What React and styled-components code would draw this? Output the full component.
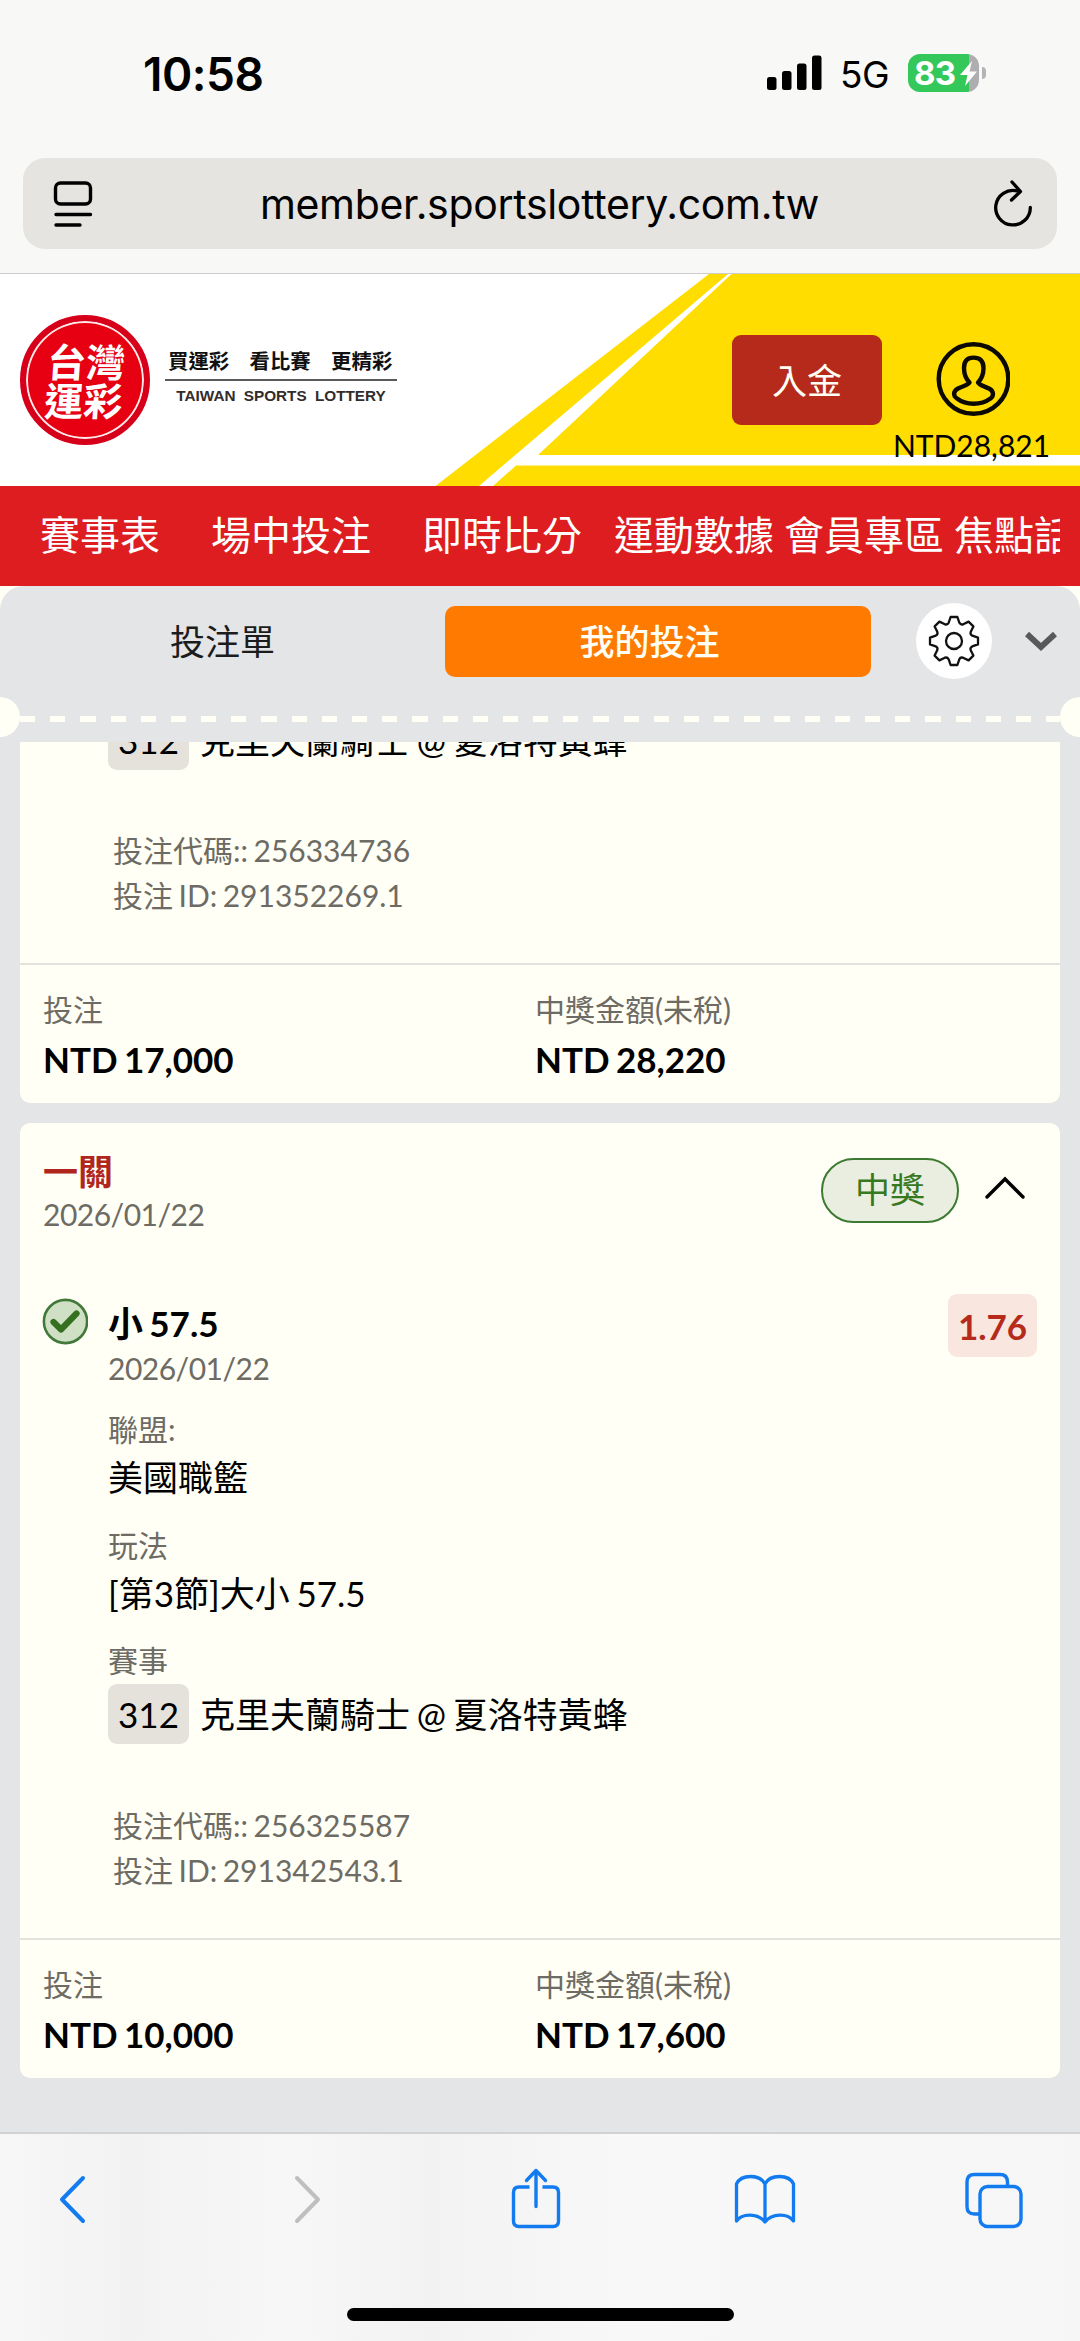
import React from "react";
import styled, { createGlobalStyle } from "styled-components";

const App = () => {
    return (
        <Screen>
            <GlobalStyle />
            <StatusBar />
            <AddressBar />
            <SiteHeader />
            <NavBar />
            <BetPanel>
                <PanelHead />
                <BetList>
                    <Card>
                        <Match match={bets[0]} />
                        <Codes bet={bets[0]} />
                        <Totals bet={bets[0]} />
                    </Card>
                    <BetCard bet={bets[1]} />
                </BetList>
            </BetPanel>
            <BrowserToolbar />
        </Screen>
    )
}

const bets = [
    {
        number: "312",
        teams: "克里夫蘭騎士 @ 夏洛特黃蜂",
        code: "256334736",
        id: "291352269.1",
        stake: "NTD 17,000",
        payout: "NTD 28,220",
    },
    {
        type: "一關",
        date: "2026/01/22",
        status: "中獎",
        pick: "小 57.5",
        odds: "1.76",
        details: [
            { label: "聯盟:", value: "美國職籃" },
            { label: "玩法", value: "[第3節]大小 57.5" },
        ],
        number: "312",
        teams: "克里夫蘭騎士 @ 夏洛特黃蜂",
        code: "256325587",
        id: "291342543.1",
        stake: "NTD 10,000",
        payout: "NTD 17,600",
    },
];

const navItems = [
    { text: "賽事表", gap: 51 },
    { text: "場中投注", gap: 51 },
    { text: "即時比分", gap: 32 },
    { text: "運動數據", gap: 10 },
    { text: "會員專區", gap: 10 },
    { text: "焦點話題", gap: 0 },
];

const StatusBar = () => (
    <StatusRow>
        <Clock>10:58</Clock>
        <StatusIcons>
            <svg width="56" height="36" viewBox="0 0 56 36">
                <rect x="0" y="22" width="9.5" height="13" rx="2.5" />
                <rect x="15" y="16" width="9.5" height="19" rx="2.5" />
                <rect x="30" y="8.5" width="9.5" height="26.5" rx="2.5" />
                <rect x="45" y="0.5" width="9.5" height="34.5" rx="2.5" />
            </svg>
            <Network>5G</Network>
            <Battery>
                <BatteryLevel>83</BatteryLevel>
                <Bolt width="21" height="27" viewBox="0 0 21 27">
                    <path d="M14 1 L2 15 H9.5 L7 26 L19 11.5 H11.5 Z" fill="#fff" />
                </Bolt>
            </Battery>
            <BatteryCap />
        </StatusIcons>
    </StatusRow>
)

const AddressBar = () => (
    <AddressWrap>
        <AddressField>
            <svg width="40" height="46" viewBox="0 0 40 46" fill="none" stroke="#000" strokeWidth="3.4" strokeLinecap="round">
                <rect x="2.5" y="2" width="35" height="21" rx="5" />
                <path d="M3 33.5 H37.5 M3 44 H27" />
            </svg>
            <Url>member.sportslottery.com.tw</Url>
            <svg width="40" height="48" viewBox="0 0 40 48" fill="none" stroke="#000" strokeWidth="3.3" strokeLinecap="round" strokeLinejoin="round">
                <path d="M24 10.8 A17.3 17.3 0 1 0 37.3 27.5" />
                <path d="M19 2 L27.5 11.5 L18.5 20" />
            </svg>
        </AddressField>
    </AddressWrap>
)

const SiteHeader = () => (
    <Header>
        <Stripes width="1080" height="212" viewBox="0 0 1080 212">
            <path d="M709 0 H1080 V212 H435.5 Z" fill="#fd0" />
            <path d="M728 0 H731.5 L538 181 H1080 V191.5 H516 L493 212 H479 Z" fill="#fff" />
        </Stripes>
        <Brand>
            <Seal>
                <SealText>
                    <span>台灣</span>
                    <span>運彩</span>
                </SealText>
            </Seal>
            <Slogan>
                <SloganZh>買運彩　看比賽　更精彩</SloganZh>
                <SloganEn>TAIWAN SPORTS LOTTERY</SloganEn>
            </Slogan>
        </Brand>
        <Deposit>入金</Deposit>
        <Account>
            <UserIcon width="74" height="76" viewBox="0 0 74 76" fill="none" stroke="#0c0a00" strokeWidth="4.4" strokeLinejoin="round">
                <circle cx="37.5" cy="38" r="34.8" />
                <path d="M33.5 41.500 C29.500 37.500 28 32.500 28 27 C28 20 31.500 16.600 37.500 16.600 C44 16.600 47.500 20 47.500 27 C47.500 32.500 46 37.500 42 41.500 C44 44.500 49 45.500 53 47.500 C58 50 58 55 54.500 57.500 C45 64.500 30 64.500 21 57.500 C17 55 17 50 22 47.500 C26 45.500 31.500 44.500 33.500 41.500 Z" />
            </UserIcon>
            <Balance>NTD28,821</Balance>
        </Account>
    </Header>
)

const NavBar = () => (
    <Nav>
        <NavScroll>
            {navItems.map((item) => (
                <NavItem key={item.text} $gap={item.gap}>{item.text}</NavItem>
            ))}
        </NavScroll>
    </Nav>
)

const PanelHead = () => (
    <div>
        <Tabs>
            <Tab>投注單</Tab>
            <ActiveTab>我的投注</ActiveTab>
            <GearButton>
                <GearIcon />
            </GearButton>
            <svg width="32" height="20" viewBox="0 0 32 20" fill="none" stroke="#58595b" strokeWidth="5.8">
                <path d="M2 3 L16 16 L30 3" />
            </svg>
        </Tabs>
        <TearLine>
            <Notch />
            <Dashes />
            <Notch $right />
        </TearLine>
    </div>
)

// eight teeth, each one turned by 45 degrees
const gearPath = () => {
    const turn = (x, y, deg) => {
        const a = (deg * Math.PI) / 180;
        const px = 26 + x * Math.cos(a) - y * Math.sin(a);
        const py = 26 + x * Math.sin(a) + y * Math.cos(a);
        return px.toFixed(2) + " " + py.toFixed(2);
    };
    let d = "";
    for (let i = 0; i < 8; i++) {
        const deg = i * 45;
        d += (i === 0 ? "M" : "L") + turn(-3.4, -24, deg);
        d += "L" + turn(3.4, -24, deg);
        d += "L" + turn(5.4, -18.2, deg);
        d += "Q" + turn(6.7, -15.8, deg) + " " + turn(9.2, -16.7, deg);
    }
    return d + "Z";
}

const GearIcon = () => (
    <svg width="52" height="52" viewBox="0 0 52 52" fill="none" stroke="#111" strokeWidth="2.3" strokeLinejoin="round">
        <path d={gearPath()} />
        <circle cx="26" cy="26" r="8" />
    </svg>
)

const Match = ({ match }) => (
    <MatchRow>
        <MatchNumber>{match.number}</MatchNumber>
        <span>{match.teams}</span>
    </MatchRow>
)

const Codes = ({ bet }) => (
    <CodeBlock>
        <div>投注代碼:: {bet.code}</div>
        <div>投注 ID: {bet.id}</div>
    </CodeBlock>
)

const Totals = ({ bet }) => (
    <TotalsRow>
        <div>
            <Label>投注</Label>
            <Amount>{bet.stake}</Amount>
        </div>
        <div>
            <Label>中獎金額(未稅)</Label>
            <Amount>{bet.payout}</Amount>
        </div>
    </TotalsRow>
)

const BetCard = ({ bet }) => (
    <Card>
        <CardHead>
            <div>
                <BetType>{bet.type}</BetType>
                <BetDate>{bet.date}</BetDate>
            </div>
            <CardHeadRight>
                <WonBadge>{bet.status}</WonBadge>
                <Chevron width="42" height="24" viewBox="0 0 42 24" fill="none" stroke="#000" strokeWidth="3.4" strokeLinecap="round">
                    <path d="M3 21 L21 3 L39 21" />
                </Chevron>
            </CardHeadRight>
        </CardHead>
        <Pick>
            <svg width="46" height="47" viewBox="0 0 46 47" fill="none" strokeLinecap="round" strokeLinejoin="round">
                <circle cx="23.5" cy="23.5" r="21.6" fill="#cfe0c4" stroke="#42793a" strokeWidth="2.6" />
                <path d="M11.5 24 L19 31.5 L34.5 15.5" stroke="#34701f" strokeWidth="6.2" />
            </svg>
            <PickText>
                <PickName>{bet.pick}</PickName>
                <BetDate>{bet.date}</BetDate>
            </PickText>
            <Odds>{bet.odds}</Odds>
        </Pick>
        {bet.details.map((detail) => (
            <Detail key={detail.label}>
                <Label>{detail.label}</Label>
                <DetailValue>{detail.value}</DetailValue>
            </Detail>
        ))}
        <Detail>
            <Label>賽事</Label>
        </Detail>
        <Match match={bet} />
        <Codes bet={bet} />
        <Totals bet={bet} />
    </Card>
)

const BrowserToolbar = () => (
    <Toolbar>
        <ToolbarIcons>
            <svg width="30" height="64" viewBox="0 0 30 64" fill="none" stroke="#127bf0" strokeWidth="4" strokeLinecap="round" strokeLinejoin="round">
                <path d="M26 10 L5 31.5 L26 53" />
            </svg>
            <svg width="30" height="64" viewBox="0 0 30 64" fill="none" stroke="#bfbfbf" strokeWidth="4" strokeLinecap="round" strokeLinejoin="round">
                <path d="M5 10 L26 31.5 L5 53" />
            </svg>
            <svg width="50" height="64" viewBox="0 0 50 64" fill="none" stroke="#127bf0" strokeWidth="3.4" strokeLinecap="round" strokeLinejoin="round">
                <path d="M18.5 19 H8 Q2.500 19 2.500 24.500 V53 Q2.500 58.500 8 58.500 H42 Q47.500 58.500 47.500 53 V24.500 Q47.500 19 42 19 H31.500" strokeLinecap="butt" />
                <path d="M25 38.5 V2.500 M15.500 12.500 L25 2.500 L34.500 12.500" />
            </svg>
            <svg width="62" height="64" viewBox="0 0 62 64" fill="none" stroke="#127bf0" strokeWidth="3.3" strokeLinejoin="round">
                <path d="M31 16 C26 6 7 6 2.500 16 V53 C8 45 24 45 31 54 C38 45 54 45 59.500 53 V16 C55 6 36 6 31 16 V54" />
            </svg>
            <svg width="58" height="64" viewBox="0 0 58 64" fill="none" stroke="#127bf0" strokeWidth="3.4">
                <path d="M14.5 46 H9.500 Q2 46 2 38.500 V14 Q2 6.500 9.500 6.500 H35 Q42.500 6.500 42.500 14 V19" />
                <rect x="15" y="18.5" width="41" height="40" rx="7.5" />
            </svg>
        </ToolbarIcons>
        <HomeIndicator />
    </Toolbar>
)


const GlobalStyle = createGlobalStyle`
    body {
        margin: 0;
        background-color: #f8f8f6;
    }
    * {
        box-sizing: border-box;
    }
    svg {
        display: block;
        flex-shrink: 0;
    }
`;

const Screen = styled.div`
    display: flex;
    flex-direction: column;
    width: 1080px;
    height: 2341px;
    overflow: hidden;
    background-color: #f8f8f6;
    font-family: Lato, "Noto Sans CJK TC", sans-serif;
    color: #000;
`;

const StatusRow = styled.div`
    display: flex;
    justify-content: space-between;
    height: 158px;
    padding: 51px 94px 0 143px;
    font-family: Inter, sans-serif;
`;

const Clock = styled.div`
    font-size: 46px;
    font-weight: 600;
    line-height: 46px;
    letter-spacing: -0.5px;
`;

const StatusIcons = styled.div`
    display: flex;
    align-items: center;
    height: 43px;
`;

const Network = styled.span`
    margin-left: 17px;
    width: 68px;
    font-size: 37px;
    line-height: 40px;
    padding-top: 4px;
    letter-spacing: -0.5px;
`;

const Battery = styled.div`
    position: relative;
    display: flex;
    align-items: center;
    width: 71px;
    height: 38px;
    padding-left: 6px;
    border-radius: 12px;
    background: linear-gradient(to right, #34c759 61px, #aeaeb0 61px);
`;

const BatteryLevel = styled.span`
    font-size: 33px;
    font-weight: 700;
    line-height: 38px;
    letter-spacing: -0.8px;
    color: #fff;
`;

const Bolt = styled.svg`
    position: absolute;
    right: 0;
    top: 6px;
`;

const BatteryCap = styled.div`
    width: 4px;
    height: 12px;
    margin-left: 3px;
    border-radius: 0 5px 5px 0;
    background-color: #b4b4b6;
`;

const AddressWrap = styled.div`
    height: 116px;
    padding: 0 23px;
    border-bottom: 1px solid #cbcbcb;
`;

const AddressField = styled.div`
    display: flex;
    align-items: center;
    justify-content: space-between;
    height: 91px;
    padding: 0 24px 0 30px;
    border-radius: 22px;
    background-color: #e5e4e0;
`;

const Url = styled.span`
    margin-right: 7px;
    font-family: Inter, sans-serif;
    font-size: 41px;
    line-height: 48px;
    letter-spacing: -0.32px;
`;

const Header = styled.header`
    position: relative;
    display: flex;
    height: 212px;
    background-color: #fff;
`;

const Stripes = styled.svg`
    position: absolute;
    left: 0;
    top: 0;
`;

const Brand = styled.div`
    position: relative;
    display: flex;
    align-items: flex-start;
    width: 732px;
    padding: 41px 0 0 20px;
`;

const Seal = styled.div`
    display: flex;
    align-items: center;
    justify-content: center;
    width: 130px;
    height: 130px;
    border: 6px solid #d7001b;
    border-radius: 50%;
    background-color: #e60012;
    box-shadow: inset 0 0 0 2px #ffe9e9;
`;

const SealText = styled.div`
    display: flex;
    flex-direction: column;
    font-family: "Noto Sans CJK TC", sans-serif;
    font-size: 39px;
    font-weight: 700;
    line-height: 39px;
    color: #fff;
    transform: skewX(-4deg);
`;

const Slogan = styled.div`
    margin: 34px 0 0 15px;
    width: 232px;
    font-family: "Liberation Sans", "Noto Sans CJK TC", sans-serif;
`;

const SloganZh = styled.div`
    padding: 1px 0 0 3px;
    height: 32px;
    border-bottom: 2px solid #5a5a5a;
    font-size: 20.4px;
    font-weight: 700;
    line-height: 25px;
    white-space: nowrap;
    color: #111;
`;

const SloganEn = styled.div`
    padding-top: 5px;
    font-size: 15.3px;
    font-weight: 700;
    line-height: 20px;
    word-spacing: 4px;
    text-align: center;
    white-space: nowrap;
    color: #332c2b;
`;

const Deposit = styled.button`
    position: relative;
    width: 150px;
    height: 90px;
    margin-top: 61px;
    padding: 0 0 4px;
    border: none;
    border-radius: 9px;
    background-color: #b52a1b;
    font-family: inherit;
    font-size: 35px;
    color: #fffff5;
`;

const Account = styled.div`
    position: relative;
    display: flex;
    flex-direction: column;
    align-items: center;
    width: 179px;
    padding-top: 67px;
`;

const UserIcon = styled.svg`
    margin-left: 3px;
`;

const Balance = styled.div`
    margin-top: 10px;
    font-size: 30px;
    line-height: 36px;
`;

const Nav = styled.nav`
    height: 100px;
    padding: 0 20px;
    background-color: #dd1d20;
`;

const NavScroll = styled.div`
    display: flex;
    padding-left: 20px;
    overflow: hidden;
`;

const NavItem = styled.span`
    flex-shrink: 0;
    margin-right: ${(props) => props.$gap}px;
    font-size: 40px;
    line-height: 98px;
    color: #fff;
`;

const BetPanel = styled.section`
    display: flex;
    flex-direction: column;
    flex: 1;
    min-height: 0;
    background: linear-gradient(#fffff5 50px, #e4e5e7 50px);
`;

const Tabs = styled.div`
    display: flex;
    align-items: center;
    height: 111px;
    padding: 0 20px 1px 0;
    border-radius: 24px 24px 0 0;
    background-color: #e4e5e7;
`;

const Tab = styled.div`
    width: 445px;
    height: 71px;
    border-radius: 10px;
    font-family: "Noto Sans CJK TC", sans-serif;
    font-size: 35px;
    line-height: 68px;
    text-align: center;
    color: #1c1c1c;
`;

const ActiveTab = styled(Tab)`
    width: 426px;
    padding-right: 17px;
    background-color: #ff7a00;
    font-weight: 500;
    color: #fffff5;
`;

const GearButton = styled.div`
    display: flex;
    align-items: center;
    justify-content: center;
    width: 76px;
    height: 76px;
    margin: 0 33px 0 45px;
    border-radius: 50%;
    background-color: #fff;
`;

const TearLine = styled.div`
    display: flex;
    align-items: center;
    height: 45px;
    padding-bottom: 5px;
    background-color: #e4e5e7;
`;

const Notch = styled.div`
    width: 20px;
    height: 40px;
    border-radius: ${(props) => (props.$right ? "20px 0 0 20px" : "0 20px 20px 0")};
    background-color: #fffff5;
`;

const Dashes = styled.div`
    flex: 1;
    height: 6px;
    margin-top: 4px;
    background: repeating-linear-gradient(to right, #fffff5 0 15.2px, transparent 15.2px 30.18px);
`;

const BetList = styled.div`
    display: flex;
    flex-direction: column;
    justify-content: flex-end;
    gap: 20px;
    flex: 1;
    min-height: 0;
    padding: 0 20px 54px;
    overflow: hidden;
    word-spacing: -2.2px;
`;

const Card = styled.article`
    flex-shrink: 0;
    border-radius: 10px;
    background-color: #fffff5;
`;

const CardHead = styled.div`
    display: flex;
    justify-content: space-between;
    height: 175px;
    padding: 25px 34px 0 23px;
`;

const CardHeadRight = styled.div`
    display: flex;
    align-items: center;
    gap: 25px;
    height: 85px;
`;

const BetType = styled.div`
    font-size: 35px;
    font-weight: 700;
    line-height: 46px;
    color: #b0261d;
`;

const WonBadge = styled.span`
    width: 138px;
    height: 65px;
    border: 2.5px solid #3b7a30;
    border-radius: 33px;
    background-color: #eaeee1;
    font-size: 35px;
    line-height: 59px;
    text-align: center;
    color: #37791f;
`;

const Chevron = styled.svg`
    margin-bottom: 6px;
`;

const Label = styled.div`
    font-size: 30px;
    line-height: 40px;
    color: #6d6b64;
`;

const BetDate = styled(Label)`
    letter-spacing: -0.5px;
`;

const Pick = styled.div`
    display: flex;
    align-items: flex-start;
    padding: 0 23px 0 22px;
`;

const PickText = styled.div`
    flex: 1;
    padding: 0 0 1.5px 20px;
`;

const PickName = styled.div`
    font-size: 35px;
    font-weight: 700;
    line-height: 50px;
`;

const Odds = styled.div`
    width: 89px;
    height: 63px;
    margin-top: -4px;
    border-radius: 9px;
    background-color: #f8e6df;
    font-size: 35px;
    font-weight: 700;
    line-height: 64px;
    text-align: center;
    color: #b52a1b;
`;

const Detail = styled.div`
    margin-top: 19.6px;
    padding-left: 88px;
`;

const DetailValue = styled.div`
    font-size: 35px;
    line-height: 56px;
`;

const MatchRow = styled.div`
    display: flex;
    align-items: center;
    gap: 11px;
    padding: 4px 0 0 88px;
    font-size: 35px;
    line-height: 60px;
`;

const MatchNumber = styled.span`
    width: 81px;
    border-radius: 9px;
    background-color: #e5e2dc;
    text-align: center;
`;

const CodeBlock = styled.div`
    padding: 58.6px 0 45px 93px;
    border-bottom: 2.5px solid #e4e2dc;
    font-size: 30px;
    line-height: 45px;
    color: #6d6b64;
`;

const TotalsRow = styled.div`
    display: grid;
    grid-template-columns: 492px 1fr;
    padding: 24px 23px 14px;
`;

const Amount = styled.div`
    font-size: 35px;
    font-weight: 700;
    line-height: 60px;
`;

const Toolbar = styled.footer`
    display: flex;
    flex-direction: column;
    align-items: center;
    justify-content: space-between;
    height: 209px;
    padding: 34px 0 20px;
    border-top: 2px solid #d2d2d2;
    background: linear-gradient(to right, #f7f7f7 0, #f2f2f2 130px, #f7f7f7 290px, #f2f2f2 430px, #f8f8f8 620px, #f6f6f6 1080px);
`;

const ToolbarIcons = styled.div`
    display: grid;
    grid-template-columns: 135px 229px 229px 229px 1fr;
    justify-items: center;
    width: 100%;
    padding: 0 57px;

    & > :first-child {
        justify-self: start;
    }
    & > :last-child {
        justify-self: end;
    }
`;

const HomeIndicator = styled.div`
    width: 387px;
    height: 13px;
    border-radius: 7px;
    background-color: #000;
`;

export default App;
